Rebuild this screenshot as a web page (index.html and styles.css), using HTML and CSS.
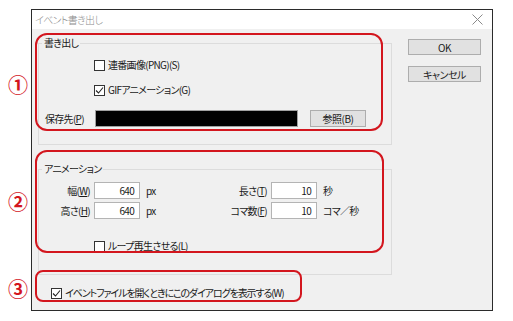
FILE: index.html
```html
<!DOCTYPE html>
<html lang="ja">
<head>
    <meta charset="UTF-8">
    <title>イベント書き出し</title>
    <link rel="stylesheet" href="styles.css">
</head>
<body>
    <div class="window">
        <div class="titlebar">
            <span class="title">イベント書き出し</span>
            <svg class="close" width="11" height="11" viewBox="0 0 11 11">
                <path d="M0.5 0.5 L10.5 10.5 M10.5 0.5 L0.5 10.5" stroke="#8a8a8a" stroke-width="1" fill="none"/>
            </svg>
        </div>
        <div class="content">
            <div class="main">
                <fieldset class="group group-export">
                    <legend>書き出し</legend>
                    <label class="check-row first">
                        <span class="check"></span>連番画像(PNG)(S)
                    </label>
                    <label class="check-row second">
                        <span class="check checked">
                            <svg width="9" height="9" viewBox="0 0 9 9"><path d="M1 4.5 L3.5 7 L8 1.5" stroke="#222" stroke-width="1.1" fill="none"/></svg>
                        </span>GIFアニメーション(G)
                    </label>
                    <div class="save-row">
                        <span class="save-label">保存先(<u>P</u>)</span>
                        <span class="path-box"></span>
                        <button class="btn browse">参照(B)</button>
                    </div>
                </fieldset>

                <fieldset class="group group-anim">
                    <legend>アニメーション</legend>
                    <div class="field-row">
                        <span class="flabel">幅(<u>W</u>)</span>
                        <span class="num">640</span>
                        <span class="unit">px</span>
                        <span class="flabel wide">長さ(<u>T</u>)</span>
                        <span class="num">10</span>
                        <span class="unit">秒</span>
                    </div>
                    <div class="field-row">
                        <span class="flabel">高さ(<u>H</u>)</span>
                        <span class="num">640</span>
                        <span class="unit">px</span>
                        <span class="flabel wide">コマ数(<u>F</u>)</span>
                        <span class="num">10</span>
                        <span class="unit">コマ／秒</span>
                    </div>
                    <label class="check-row loop">
                        <span class="check"></span>ループ再生させる(L)
                    </label>
                </fieldset>

                <label class="check-row show-dialog">
                    <span class="check checked">
                        <svg width="9" height="9" viewBox="0 0 9 9"><path d="M1 4.5 L3.5 7 L8 1.5" stroke="#222" stroke-width="1.1" fill="none"/></svg>
                    </span>イベントファイルを開くときにこのダイアログを表示する(W)
                </label>
            </div>
            <div class="side">
                <button class="btn side-btn">OK</button>
                <button class="btn side-btn">キャンセル</button>
            </div>
        </div>
    </div>

    <!-- annotation marks drawn over the dialog -->
    <div class="mark mark-1"></div>
    <div class="mark mark-2"></div>
    <div class="mark mark-3"></div>
    <span class="num-mark n1">①</span>
    <span class="num-mark n2">②</span>
    <span class="num-mark n3">③</span>
</body>
</html>
```

FILE: styles.css
```css
body {
    margin: 0;
    padding: 9px 0 0 31px;
    background: #fff;
    font-family: "Noto Sans CJK JP", "Noto Sans", sans-serif;
    font-size: 10px;
    letter-spacing: -0.7px;
    font-feature-settings: "palt";
    color: #1a1a1a;
    position: relative;
    height: 312px;
    overflow: hidden;
}

.window {
    width: 460px;
    height: 300px;
    border: 1px solid #2b2b2b;
    background: #f0f0f0;
    overflow: hidden;
}

.titlebar {
    height: 19px;
    background: #fff;
    display: flex;
    align-items: center;
    justify-content: space-between;
    padding: 0 9px 0 3px;
}

.title {
    color: #8a8a8a;
    font-weight: 300;
}

.content {
    display: flex;
    padding-top: 7px;
}

.main {
    padding-left: 6px;
    width: 354px;
}

.group {
    margin: 0;
    padding: 0;
    border: 1px solid #dcdcdc;
    min-width: 0;
}

.group legend {
    padding: 0 2px;
    margin-left: 3px;
    line-height: 14px;
    height: 14px;
}

.check-row {
    display: flex;
    align-items: center;
    height: 16px;
    padding-left: 55px;
    line-height: 16px;
    white-space: nowrap;
}

.check {
    width: 11px;
    height: 11px;
    box-sizing: border-box;
    border: 1px solid #333;
    background: #fff;
    margin-right: 3px;
    display: flex;
    align-items: center;
    justify-content: center;
}

.check-row.first {
    margin-top: 7px;
}

.check-row.second {
    margin-top: 9px;
}

.save-row {
    display: flex;
    align-items: center;
    height: 17px;
    margin: 12px 0 17px 6px;
}

.save-label {
    width: 50px;
}

.path-box {
    width: 201px;
    height: 15px;
    background: #000;
    border: 1px solid #a0a0a0;
}

.btn {
    font-family: inherit;
    font-size: 10px;
    letter-spacing: -0.5px;
    font-feature-settings: "palt";
    background: #e1e1e1;
    border: 1px solid #adadad;
    padding: 0;
    color: #1a1a1a;
    line-height: 13px;
}

.browse {
    width: 56px;
    height: 17px;
    margin-left: 12px;
}

.group-anim {
    margin-top: 17px;
    padding-bottom: 20px;
}

.field-row {
    display: flex;
    align-items: center;
    height: 17px;
    margin-top: 3px;
    white-space: nowrap;
}

.field-row:first-of-type {
    margin-top: 6px;
}

.flabel {
    width: 51px;
    text-align: right;
    margin-right: 4px;
}

.flabel.wide {
    width: 87px;
}

.num {
    width: 46px;
    height: 17px;
    box-sizing: border-box;
    border: 1px solid #b4b4b4;
    background: #fff;
    text-align: right;
    padding-right: 5px;
    line-height: 15px;
}

.unit {
    width: 40px;
    padding-left: 6px;
    box-sizing: border-box;
}

.check-row.loop {
    margin-top: 19px;
}

.show-dialog {
    margin-top: 10px;
    padding-left: 13px;
    letter-spacing: -1.1px;
}

.side {
    display: flex;
    flex-direction: column;
    gap: 11px;
    padding: 3px 0 0 16px;
}

.side-btn {
    width: 73px;
    height: 16px;
}

.mark {
    position: absolute;
    border: 2px solid #d3161e;
    border-radius: 12px;
    box-sizing: border-box;
}

.mark-1 {
    left: 35px;
    top: 33px;
    width: 348px;
    height: 98px;
}

.mark-2 {
    left: 35px;
    top: 150px;
    width: 349px;
    height: 103px;
}

.mark-3 {
    left: 35px;
    top: 270px;
    width: 267px;
    height: 32px;
    border-radius: 8px;
}

.num-mark {
    position: absolute;
    left: 7px;
    width: 22px;
    text-align: center;
    color: #d3161e;
    font-size: 20px;
    font-weight: 700;
    letter-spacing: 0;
    line-height: 20px;
    font-feature-settings: normal;
}

.n1 { top: 75px; }
.n2 { top: 192px; }
.n3 { top: 279px; }
```
